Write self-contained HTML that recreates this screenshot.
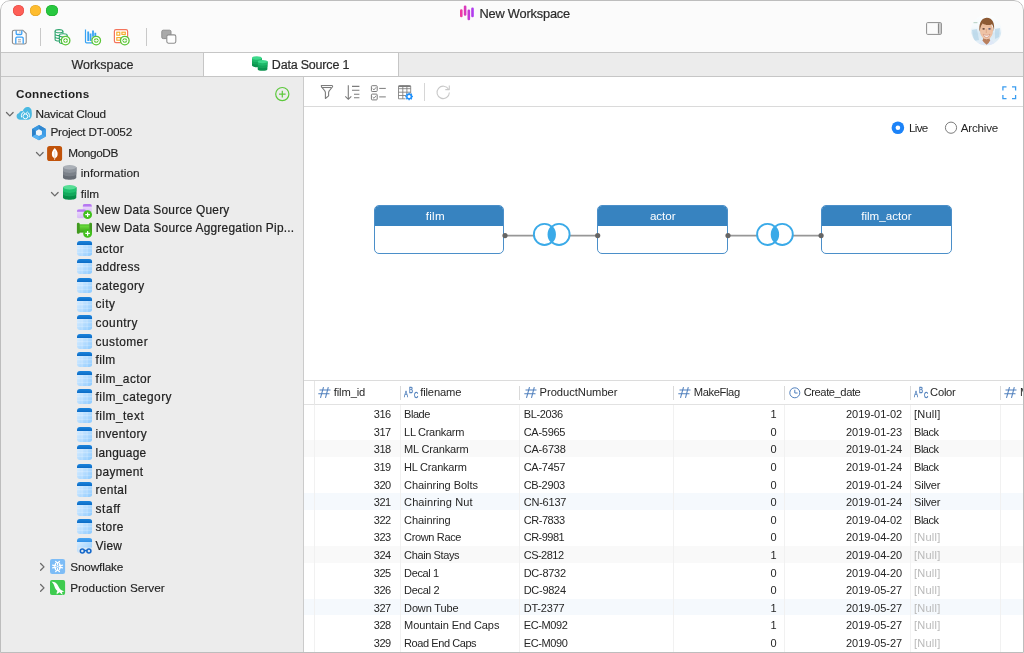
<!DOCTYPE html>
<html><head><meta charset="utf-8"><title>New Workspace</title>
<style>
*{box-sizing:border-box;margin:0;padding:0}
html,body{width:1024px;height:653px;overflow:hidden;background:#fff;font-family:"Liberation Sans",sans-serif;color:#262626}
#win{position:absolute;left:0;top:0;width:1024px;height:653px;border-radius:10px 10px 0 0;overflow:hidden;background:#fff;will-change:transform}
#frame{position:absolute;left:0;top:0;width:1024px;height:653px;border:1px solid #bdbdbd;border-radius:10px 10px 0 0;pointer-events:none}
.abs{position:absolute}
#titlebar{position:absolute;left:0;top:0;width:1024px;height:53px;background:#fbfbfb;border-bottom:1px solid #c6c6c6}
.tl{position:absolute;top:4.7px;width:11.4px;height:11.4px;border-radius:50%}
#tabbar{position:absolute;left:0;top:53px;width:1024px;height:24px;background:#ececec;border-bottom:1px solid #c6c6c6}
#tab2{position:absolute;left:203px;top:53px;width:196px;height:23px;background:#fff;border-left:1px solid #c6c6c6;border-right:1px solid #c6c6c6}
#side{position:absolute;left:0;top:77px;width:304px;height:576px;background:#ececec;border-right:1px solid #cbcbcb}
.t{position:absolute;white-space:pre}
#main{position:absolute;left:304px;top:77px;width:720px;height:576px;background:#fff}
svg{position:absolute;overflow:visible}
</style></head>
<body>
<div id="win">
<div id="titlebar"></div>
<div class="tl" style="left:12.9px;background:#fe5f57;box-shadow:inset 0 0 0 .5px #e0443e"></div>
<div class="tl" style="left:29.7px;background:#febc2e;box-shadow:inset 0 0 0 .5px #dea123"></div>
<div class="tl" style="left:46.3px;background:#28c840;box-shadow:inset 0 0 0 .5px #1aab29"></div>
<svg style="left:459px;top:5px" width="16" height="16" viewBox="0 0 16 16">
<defs><linearGradient id="lg1" gradientUnits="userSpaceOnUse" x1="1" y1="0" x2="15" y2="0"><stop offset="0" stop-color="#f5369b"/><stop offset="1" stop-color="#a93cf7"/></linearGradient></defs>
<g fill="url(#lg1)"><rect x="1" y="4.2" width="2.6" height="8" rx="1.2"/><rect x="4.8" y="0.6" width="2.6" height="10.2" rx="1.2"/><rect x="8.5" y="4.6" width="2.6" height="10.6" rx="1.2"/><rect x="12.2" y="2.6" width="2.6" height="9.6" rx="1.2"/></g></svg>
<div class="t" style="top:5.56px;font-size:12.8px;height:16px;line-height:16px;color:#2b2b2b;letter-spacing:-0.178px;left:479.4px;-webkit-text-stroke:.2px #2b2b2b;">New Workspace</div>
<svg style="left:11px;top:28px" width="18" height="18" viewBox="0 0 18 18">
<path d="M3.2 2.2h8.6l3.4 3.4v8.6a1.8 1.8 0 0 1-1.8 1.8H3.2a1.8 1.8 0 0 1-1.8-1.8V4a1.8 1.8 0 0 1 1.8-1.8z" fill="#fdfdfd" stroke="#8c8c8c" stroke-width="1.1"/>
<path d="M5.2 2.4v3.1a1 1 0 0 0 1 1h3.6a1 1 0 0 0 1-1V2.4" fill="none" stroke="#3aa0f5" stroke-width="1.3"/>
<path d="M4.8 15.8v-5.4a1.2 1.2 0 0 1 1.2-1.2h5a1.2 1.2 0 0 1 1.2 1.2v5.4" fill="none" stroke="#3aa0f5" stroke-width="1.3"/>
<path d="M7 11.8h3M7 13.8h3" stroke="#9a9a9a" stroke-width="0.9"/><path d="M8.9 3.4v1.4" stroke="#9a9a9a" stroke-width="0.9"/></svg>
<div class="abs" style="left:40px;top:28px;width:1px;height:18px;background:#c9c9c9"></div>
<svg style="left:54px;top:28px" width="18" height="18" viewBox="0 0 18 18"><g fill="none" stroke="#2ea56e" stroke-width="1.1">
<ellipse cx="5" cy="3.2" rx="3.9" ry="1.6"/><path d="M1.1 3.2v8.2c0 .9 1.7 1.6 3.9 1.6M8.9 3.2v2.2M1.1 6c0 .9 1.7 1.6 3.9 1.6M1.1 8.8c0 .9 1.7 1.6 3.9 1.6"/>
<ellipse cx="9.3" cy="7.4" rx="3.9" ry="1.6"/><path d="M5.4 7.4v6.6c0 .9 1.7 1.6 3.9 1.6M13.2 7.4v2M5.4 10.6c0 .9 1.7 1.6 3.9 1.6"/></g><circle cx="11.6" cy="12.6" r="4.3" fill="#fff" stroke="#5bc637" stroke-width="1.3"/><circle cx="11.6" cy="12.6" r="2.4" fill="#5bc637"/><path d="M9.8 12.6h3.6M11.6 10.8v3.6" stroke="#fff" stroke-width="0.9"/></svg>
<svg style="left:84px;top:28px" width="18" height="18" viewBox="0 0 18 18"><g fill="none" stroke="#37a3f4">
<path d="M1.5 1.6v12.2a1 1 0 0 0 1 1H9" stroke-width="1.2"/><path d="M4.200 3.600v9.400M6.600 5.600v7.400M9 2.600v6.200M11.300 4.800v3.400" stroke-width="1.800"/></g><circle cx="12.2" cy="12.6" r="4.3" fill="#fff" stroke="#5bc637" stroke-width="1.3"/><circle cx="12.2" cy="12.6" r="2.4" fill="#5bc637"/><path d="M10.4 12.6h3.6M12.2 10.8v3.6" stroke="#fff" stroke-width="0.9"/></svg>
<svg style="left:113px;top:28px" width="18" height="18" viewBox="0 0 18 18">
<rect x="1.4" y="1.7" width="13.2" height="13" rx="1.6" fill="#fff" stroke="#f4745c" stroke-width="1.2"/>
<g fill="none" stroke="#f5a827" stroke-width="1.1"><rect x="3.8" y="4.2" width="3" height="3"/><rect x="8.9" y="4.2" width="3.4" height="2.2"/><rect x="3.8" y="9.6" width="3.6" height="2.6"/></g><circle cx="11.8" cy="12.6" r="4.3" fill="#fff" stroke="#5bc637" stroke-width="1.3"/><circle cx="11.8" cy="12.6" r="2.4" fill="#5bc637"/><path d="M10 12.6h3.6M11.8 10.8v3.6" stroke="#fff" stroke-width="0.9"/></svg>
<div class="abs" style="left:146px;top:28px;width:1px;height:18px;background:#c9c9c9"></div>
<svg style="left:160px;top:28px" width="18" height="18" viewBox="0 0 18 18">
<rect x="1.8" y="2.2" width="9.2" height="8.4" rx="1.4" fill="#a9a9a9" stroke="#8f8f8f" stroke-width="1"/>
<rect x="6.8" y="6.9" width="9" height="8.3" rx="1.6" fill="#fdfdfd" stroke="#8f8f8f" stroke-width="1.1"/></svg>
<svg style="left:926px;top:22px" width="16" height="13" viewBox="0 0 16 13">
<rect x="12.4" y="1" width="3" height="11" fill="#cfcfcf"/><rect x="0.6" y="0.6" width="14.8" height="11.8" rx="1" fill="none" stroke="#8d8d8d" stroke-width="1"/><path d="M12.4 1.400v10.200" stroke="#808080" stroke-width="1"/></svg>
<svg style="left:970.800px;top:14.500px" width="30.600" height="30.600" viewBox="0 0 30.600 30.600"><defs><clipPath id="av"><circle cx="15.300" cy="15.300" r="15.200"/></clipPath>
<linearGradient id="avb" x1="0" y1="0" x2="0" y2="1"><stop offset="0" stop-color="#fdfefe"/><stop offset=".42" stop-color="#f4f9fc"/><stop offset=".6" stop-color="#d6e8f3"/><stop offset="1" stop-color="#e6f0f7"/></linearGradient></defs>
<g clip-path="url(#av)"><rect width="30.600" height="30.600" fill="url(#avb)"/>
<path d="M1 15l5-1 2 11-5 1zM24 14l5-1-1 9-4 2z" fill="#b7d5e8" opacity=".75"/><rect x="2.400" y="7" width="4" height="1.200" fill="#a9c9b8" opacity=".7"/>
<path d="M6.500 30.600c1.200-3.200 3.800-4.800 5.800-5.300l3.300 2.600 3.300-2.900c2.400.5 4.600 2.300 5.600 5.600z" fill="#dfe8f7"/>
<path d="M11.600 25.600c1 1.700 2.400 3 4 4.200 1.500-1.200 2.700-2.700 3.500-4.400l-1.100-3.400h-5.300z" fill="#b97f5e"/>
<ellipse cx="15.500" cy="15.400" rx="6.500" ry="8.800" fill="#ecbd9d"/><ellipse cx="15.500" cy="18" rx="5.400" ry="6.200" fill="#efc3a6"/>
<path d="M8.700 16.800C7.400 9.800 9.800 3 15.600 2.700c5.800-.2 8.500 5.200 7.300 13.700-.2-3.400-.8-5.600-1.900-7.200-2.700 1.300-6.700 1.200-9.300-.6-1.700 1.800-2.500 4.600-3 8.200z" fill="#8d5a34"/>
<path d="M12.300 19.300c2 1.400 4.600 1.400 6.600 0-.5 2-1.800 3-3.300 3s-2.800-1-3.300-3z" fill="#fff" stroke="#cf8d77" stroke-width=".7"/>
<ellipse cx="12.600" cy="13.900" rx="1.300" ry=".8" fill="#6b4a3a"/><ellipse cx="18.500" cy="13.900" rx="1.300" ry=".8" fill="#5f5d78"/><path d="M15.300 14v4" stroke="#d9a283" stroke-width=".8"/></g></svg>
<div id="tabbar"></div><div id="tab2"></div>
<div class="t" style="top:56.67px;font-size:12.5px;height:16px;line-height:16px;color:#2b2b2b;letter-spacing:-0.037px;left:71.5px;-webkit-text-stroke:.2px #2b2b2b;">Workspace</div>
<div class="t" style="top:56.67px;font-size:12.5px;height:16px;line-height:16px;color:#2b2b2b;letter-spacing:-0.193px;left:271.8px;-webkit-text-stroke:.2px #2b2b2b;">Data Source 1</div>
<svg style="left:252px;top:56px" width="16" height="16" viewBox="0 0 16 16"><path d="M0 2v7.600c0 .9 2.200 1.600 4.850 1.600s4.850-.7 4.850-1.600v-7.600z" fill="#0c934f"/><path d="M0 2v5c0 .9 2.200 1.600 4.850 1.600s4.850-.7 4.850-1.600v-5z" fill="#14a65b"/><path d="M0 2v2.500c0 .9 2.200 1.600 4.850 1.600s4.850-.7 4.850-1.600v-2.500z" fill="#1fb86a"/><ellipse cx="4.85" cy="2" rx="4.850" ry="1.650" fill="#3fd98c"/><path d="M5.7 5.6v7.600c0 .9 2.200 1.600 4.850 1.600s4.850-.7 4.850-1.600v-7.600z" fill="#0c934f"/><path d="M5.7 5.6v5c0 .9 2.200 1.600 4.850 1.600s4.850-.7 4.850-1.600v-5z" fill="#14a65b"/><path d="M5.7 5.6v2.500c0 .9 2.200 1.600 4.850 1.600s4.850-.7 4.850-1.600v-2.500z" fill="#1fb86a"/><ellipse cx="10.55" cy="5.6" rx="4.850" ry="1.650" fill="#3fd98c"/></svg>
<div id="side"></div>
<div class="t" style="top:85.95px;font-size:11.7px;height:16px;line-height:16px;color:#1f1f1f;font-weight:bold;letter-spacing:0.242px;left:16px;">Connections</div>
<svg style="left:274px;top:86px" width="16" height="16" viewBox="0 0 16 16"><circle cx="8.300" cy="8.100" r="6.600" fill="none" stroke="#5cc83c" stroke-width="1.200"/><path d="M5 8.100h6.600M8.300 4.800v6.600" stroke="#5cc83c" stroke-width="1.200"/></svg>
<svg style="left:5.8px;top:112.2px" width="8" height="5" viewBox="0 0 8 5"><path d="M0.500 0.500l3.300 3.400 3.300-3.400" fill="none" stroke="#6b6b6b" stroke-width="1.300" stroke-linecap="round" stroke-linejoin="round"/></svg>
<svg style="left:35.6px;top:151.6px" width="8" height="5" viewBox="0 0 8 5"><path d="M0.500 0.500l3.300 3.400 3.300-3.400" fill="none" stroke="#6b6b6b" stroke-width="1.300" stroke-linecap="round" stroke-linejoin="round"/></svg>
<svg style="left:51.4px;top:191.6px" width="8" height="5" viewBox="0 0 8 5"><path d="M0.500 0.500l3.300 3.400 3.300-3.400" fill="none" stroke="#6b6b6b" stroke-width="1.300" stroke-linecap="round" stroke-linejoin="round"/></svg>
<svg style="left:39.8px;top:563.2px" width="5" height="8" viewBox="0 0 5 8"><path d="M0.600 0.500l3.400 3.400-3.400 3.400" fill="none" stroke="#6b6b6b" stroke-width="1.300" stroke-linecap="round" stroke-linejoin="round"/></svg>
<svg style="left:39.8px;top:583.6px" width="5" height="8" viewBox="0 0 5 8"><path d="M0.600 0.500l3.400 3.400-3.400 3.400" fill="none" stroke="#6b6b6b" stroke-width="1.300" stroke-linecap="round" stroke-linejoin="round"/></svg>
<svg style="left:16px;top:106px" width="17" height="15" viewBox="0 0 17 15">
<path d="M4.300 13.800C2.200 13.800.6 12.300.6 10.300c0-1.600 1.100-2.900 2.600-3.200C3.400 5.800 4.400 5 5.600 5c.4 0 .8.100 1.100.3C7.400 2.800 9.200 1.100 11.400 1.100c2.600 0 4.500 2.100 4.300 4.800.2 1 .2 2 .1 3-.1 2.800-1.900 4.900-4.300 4.900z" fill="#4ab9e2"/>
<g fill="none" stroke="#fff" stroke-width=".95"><circle cx="9.400" cy="10.400" r="2.400"/><path d="M5.600 11.400c-.6-2.400.2-4.400 1.700-5.300.9.300 1.400 1 1.500 1.800M13.200 11.400c.6-2.400-.2-4.400-1.700-5.300-.9.300-1.400 1-1.500 1.800"/></g></svg>
<svg style="left:32px;top:124.800px" width="14" height="16" viewBox="0 0 14 16">
<path d="M6.950.1l6.850 3.800v7.600l-6.850 3.800L.1 11.500V3.900z" fill="#3893db"/>
<path d="M6.950.1l6.850 3.800-3.400 1.900-3.450-1.900z" fill="#2f86cf"/><path d="M.1 3.900L6.950.1v3.800L3.500 5.800z" fill="#3a97df"/><path d="M.1 11.500V3.900l3.400 1.900v3.800z" fill="#2b7fc6"/><path d="M13.800 3.900v7.600l-3.400-1.900V5.800z" fill="#3d9ce6"/><path d="M6.950 15.300L.1 11.500l3.400-1.900 3.450 1.900z" fill="#58b4f5"/><path d="M6.950 15.300v-3.800l3.450-1.900 3.400 1.900z" fill="#4aa8ee"/>
<path d="M6.950 4.300l3 1.700v3.400l-3 1.700-3-1.700V6z" fill="#f2f6fa"/></svg>
<svg style="left:47px;top:145.500px" width="16" height="16" viewBox="0 0 16 16"><rect x=".1" y=".1" width="15" height="15" rx="2.600" fill="#c1530a"/>
<path d="M7.750 2.100c1.900 2 2.900 3.800 2.900 5.900 0 2.100-1.100 3.500-2.500 4.300l-.15 1.600h-.5l-.15-1.600C5.950 11.500 4.850 10.100 4.850 8c0-2.100 1-3.900 2.900-5.900z" fill="#fff"/><path d="M7.750 5v8.800" stroke="#e2a77e" stroke-width=".5"/></svg>
<svg style="left:62.9px;top:165.1px" width="14" height="15" viewBox="0 0 14 15"><path d="M0 2.200v10.200c0 1.300 3 2.300 6.650 2.300s6.650-1 6.650-2.300V2.200z" fill="#676d75"/><path d="M0 2.200v6.800c0 1.300 3 2.300 6.650 2.300s6.650-1 6.650-2.300V2.200z" fill="#7b8189"/><path d="M0 2.200v3.400c0 1.300 3 2.300 6.650 2.300s6.650-1 6.650-2.300V2.200z" fill="#8f959d"/><ellipse cx="6.650" cy="2.300" rx="6.650" ry="2.200" fill="#abb0b7"/></svg>
<svg style="left:62.9px;top:185.2px" width="14" height="15" viewBox="0 0 14 15"><path d="M0 2.200v10.200c0 1.300 3 2.300 6.650 2.300s6.650-1 6.650-2.300V2.200z" fill="#088e49"/><path d="M0 2.200v6.800c0 1.300 3 2.300 6.650 2.300s6.650-1 6.650-2.300V2.200z" fill="#14a95c"/><path d="M0 2.200v3.400c0 1.300 3 2.300 6.650 2.300s6.650-1 6.650-2.300V2.200z" fill="#22c170"/><ellipse cx="6.650" cy="2.300" rx="6.650" ry="2.200" fill="#56dd95"/></svg>
<svg style="left:76px;top:203px" width="17" height="17" viewBox="0 0 17 17"><defs>
<linearGradient id="qb" x1="0" y1="0" x2="0" y2="1"><stop offset="0" stop-color="#efe2fc"/><stop offset="1" stop-color="#d7b9f8"/></linearGradient>
<clipPath id="qc1"><rect x="6.600" y="1" width="9.300" height="9" rx="2"/></clipPath><clipPath id="qc2"><rect x=".9" y="6.200" width="9.300" height="9.200" rx="2"/></clipPath></defs>
<g clip-path="url(#qc1)"><rect x="6.600" y="1" width="9.300" height="9" fill="url(#qb)"/><rect x="6.600" y="1" width="9.300" height="2.600" fill="#b678f1"/></g>
<g clip-path="url(#qc2)"><rect x=".9" y="6.200" width="9.300" height="9.200" fill="url(#qb)"/><rect x=".9" y="6.200" width="9.300" height="2.600" fill="#b678f1"/></g>
<circle cx="11.6" cy="11.7" r="4.400" fill="#41c01c"/><path d="M9.3 11.7h4.600M11.6 9.4v4.600" stroke="#fff" stroke-width="1.250"/></svg>
<svg style="left:76px;top:222px" width="17" height="17" viewBox="0 0 17 17"><defs>
<linearGradient id="pg" x1="0" y1="0" x2="0" y2="1"><stop offset="0" stop-color="#4fc226"/><stop offset=".25" stop-color="#66d63a"/><stop offset="1" stop-color="#3c9e19"/></linearGradient></defs>
<rect x="3" y="2.300" width="10.500" height="8.300" fill="url(#pg)"/>
<rect x=".9" y=".7" width="2.800" height="11" rx="1.200" fill="#41991f"/><rect x="13.200" y=".7" width="2.800" height="11" rx="1.200" fill="#41991f"/>
<circle cx="11.6" cy="11.4" r="4.400" fill="#41c01c"/><path d="M9.3 11.4h4.600M11.6 9.1v4.600" stroke="#fff" stroke-width="1.250"/></svg>
<svg width="0" height="0" style="left:0;top:0"><defs>
<linearGradient id="th" x1="0" y1="0" x2="0" y2="1"><stop offset="0" stop-color="#1c84dc"/><stop offset="1" stop-color="#0c6cc6"/></linearGradient>
<linearGradient id="tb" x1="0" y1="0" x2="1" y2="1"><stop offset="0" stop-color="#e4f2ff"/><stop offset="1" stop-color="#8ccaff"/></linearGradient>
<linearGradient id="th2" x1="0" y1="0" x2="0" y2="1"><stop offset="0" stop-color="#4aa5f2"/><stop offset="1" stop-color="#2f8fe6"/></linearGradient>
<clipPath id="tc"><rect x="0" y="0" width="15.200" height="15" rx="3"/></clipPath></defs></svg>
<div class="t" style="top:105.91px;font-size:11.8px;height:16px;line-height:16px;color:#222;letter-spacing:-0.236px;left:35.5px;-webkit-text-stroke:.12px #222;">Navicat Cloud</div>
<div class="t" style="top:123.91px;font-size:11.8px;height:16px;line-height:16px;color:#222;letter-spacing:-0.246px;left:50.4px;-webkit-text-stroke:.12px #222;">Project DT-0052</div>
<div class="t" style="top:144.91px;font-size:11.8px;height:16px;line-height:16px;color:#222;letter-spacing:-0.378px;left:68.2px;-webkit-text-stroke:.12px #222;">MongoDB</div>
<div class="t" style="top:164.91px;font-size:11.8px;height:16px;line-height:16px;color:#222;letter-spacing:0.064px;left:80.7px;-webkit-text-stroke:.12px #222;">information</div>
<div class="t" style="top:185.91px;font-size:11.8px;height:16px;line-height:16px;color:#222;letter-spacing:-0.020px;left:80.8px;-webkit-text-stroke:.12px #222;">film</div>
<div class="t" style="top:201.88px;font-size:11.9px;height:16px;line-height:16px;color:#222;letter-spacing:0.236px;left:95.7px;-webkit-text-stroke:.2px #222;">New Data Source Query</div>
<div class="t" style="top:219.88px;font-size:11.9px;height:16px;line-height:16px;color:#222;letter-spacing:0.246px;left:95.7px;-webkit-text-stroke:.2px #222;">New Data Source Aggregation Pip...</div>
<div class="t" style="top:558.91px;font-size:11.8px;height:16px;line-height:16px;color:#222;letter-spacing:-0.155px;left:70.2px;-webkit-text-stroke:.12px #222;">Snowflake</div>
<div class="t" style="top:579.91px;font-size:11.8px;height:16px;line-height:16px;color:#222;letter-spacing:0.011px;left:70.2px;-webkit-text-stroke:.12px #222;">Production Server</div>
<div class="t" style="top:240.88px;font-size:11.9px;height:16px;line-height:16px;color:#222;letter-spacing:0.416px;left:95.6px;-webkit-text-stroke:.2px #222;">actor</div>
<div class="t" style="top:258.88px;font-size:11.9px;height:16px;line-height:16px;color:#222;letter-spacing:0.298px;left:95.6px;-webkit-text-stroke:.2px #222;">address</div>
<div class="t" style="top:277.88px;font-size:11.9px;height:16px;line-height:16px;color:#222;letter-spacing:0.442px;left:95.6px;-webkit-text-stroke:.2px #222;">category</div>
<div class="t" style="top:295.88px;font-size:11.9px;height:16px;line-height:16px;color:#222;letter-spacing:0.485px;left:95.6px;-webkit-text-stroke:.2px #222;">city</div>
<div class="t" style="top:314.88px;font-size:11.9px;height:16px;line-height:16px;color:#222;letter-spacing:0.483px;left:95.6px;-webkit-text-stroke:.2px #222;">country</div>
<div class="t" style="top:333.88px;font-size:11.9px;height:16px;line-height:16px;color:#222;letter-spacing:0.442px;left:95.6px;-webkit-text-stroke:.2px #222;">customer</div>
<div class="t" style="top:351.88px;font-size:11.9px;height:16px;line-height:16px;color:#222;letter-spacing:0.367px;left:95.6px;-webkit-text-stroke:.2px #222;">film</div>
<div class="t" style="top:370.88px;font-size:11.9px;height:16px;line-height:16px;color:#222;letter-spacing:0.428px;left:95.6px;-webkit-text-stroke:.2px #222;">film_actor</div>
<div class="t" style="top:388.88px;font-size:11.9px;height:16px;line-height:16px;color:#222;letter-spacing:0.432px;left:95.6px;-webkit-text-stroke:.2px #222;">film_category</div>
<div class="t" style="top:407.88px;font-size:11.9px;height:16px;line-height:16px;color:#222;letter-spacing:0.477px;left:95.6px;-webkit-text-stroke:.2px #222;">film_text</div>
<div class="t" style="top:425.88px;font-size:11.9px;height:16px;line-height:16px;color:#222;letter-spacing:0.356px;left:95.6px;-webkit-text-stroke:.2px #222;">inventory</div>
<div class="t" style="top:444.88px;font-size:11.9px;height:16px;line-height:16px;color:#222;letter-spacing:0.223px;left:95.6px;-webkit-text-stroke:.2px #222;">language</div>
<div class="t" style="top:463.88px;font-size:11.9px;height:16px;line-height:16px;color:#222;letter-spacing:0.298px;left:95.6px;-webkit-text-stroke:.2px #222;">payment</div>
<div class="t" style="top:481.88px;font-size:11.9px;height:16px;line-height:16px;color:#222;letter-spacing:0.290px;left:95.6px;-webkit-text-stroke:.2px #222;">rental</div>
<div class="t" style="top:500.88px;font-size:11.9px;height:16px;line-height:16px;color:#222;letter-spacing:0.559px;left:95.6px;-webkit-text-stroke:.2px #222;">staff</div>
<div class="t" style="top:518.88px;font-size:11.9px;height:16px;line-height:16px;color:#222;letter-spacing:0.341px;left:95.6px;-webkit-text-stroke:.2px #222;">store</div>
<div class="t" style="top:537.88px;font-size:11.9px;height:16px;line-height:16px;color:#222;letter-spacing:0.246px;left:95.6px;-webkit-text-stroke:.2px #222;">View</div>
<svg style="left:76.9px;top:240.9px" width="16" height="15" viewBox="0 0 16 15"><g clip-path="url(#tc)"><rect width="15.200" height="15" fill="url(#tb)"/><path d="M5.100 4v11M10.100 4v11M0 7.700h15.200M0 11.300h15.200" stroke="#fff" stroke-opacity=".35" stroke-width=".7"/><rect width="15.200" height="4" fill="url(#th)"/></g></svg>
<svg style="left:76.9px;top:259.47px" width="16" height="15" viewBox="0 0 16 15"><g clip-path="url(#tc)"><rect width="15.200" height="15" fill="url(#tb)"/><path d="M5.100 4v11M10.100 4v11M0 7.700h15.200M0 11.300h15.200" stroke="#fff" stroke-opacity=".35" stroke-width=".7"/><rect width="15.200" height="4" fill="url(#th)"/></g></svg>
<svg style="left:76.9px;top:278.04px" width="16" height="15" viewBox="0 0 16 15"><g clip-path="url(#tc)"><rect width="15.200" height="15" fill="url(#tb)"/><path d="M5.100 4v11M10.100 4v11M0 7.700h15.200M0 11.300h15.200" stroke="#fff" stroke-opacity=".35" stroke-width=".7"/><rect width="15.200" height="4" fill="url(#th)"/></g></svg>
<svg style="left:76.9px;top:296.61px" width="16" height="15" viewBox="0 0 16 15"><g clip-path="url(#tc)"><rect width="15.200" height="15" fill="url(#tb)"/><path d="M5.100 4v11M10.100 4v11M0 7.700h15.200M0 11.300h15.200" stroke="#fff" stroke-opacity=".35" stroke-width=".7"/><rect width="15.200" height="4" fill="url(#th)"/></g></svg>
<svg style="left:76.9px;top:315.18px" width="16" height="15" viewBox="0 0 16 15"><g clip-path="url(#tc)"><rect width="15.200" height="15" fill="url(#tb)"/><path d="M5.100 4v11M10.100 4v11M0 7.700h15.200M0 11.300h15.200" stroke="#fff" stroke-opacity=".35" stroke-width=".7"/><rect width="15.200" height="4" fill="url(#th)"/></g></svg>
<svg style="left:76.9px;top:333.75px" width="16" height="15" viewBox="0 0 16 15"><g clip-path="url(#tc)"><rect width="15.200" height="15" fill="url(#tb)"/><path d="M5.100 4v11M10.100 4v11M0 7.700h15.200M0 11.300h15.200" stroke="#fff" stroke-opacity=".35" stroke-width=".7"/><rect width="15.200" height="4" fill="url(#th)"/></g></svg>
<svg style="left:76.9px;top:352.32px" width="16" height="15" viewBox="0 0 16 15"><g clip-path="url(#tc)"><rect width="15.200" height="15" fill="url(#tb)"/><path d="M5.100 4v11M10.100 4v11M0 7.700h15.200M0 11.300h15.200" stroke="#fff" stroke-opacity=".35" stroke-width=".7"/><rect width="15.200" height="4" fill="url(#th)"/></g></svg>
<svg style="left:76.9px;top:370.89px" width="16" height="15" viewBox="0 0 16 15"><g clip-path="url(#tc)"><rect width="15.200" height="15" fill="url(#tb)"/><path d="M5.100 4v11M10.100 4v11M0 7.700h15.200M0 11.300h15.200" stroke="#fff" stroke-opacity=".35" stroke-width=".7"/><rect width="15.200" height="4" fill="url(#th)"/></g></svg>
<svg style="left:76.9px;top:389.46px" width="16" height="15" viewBox="0 0 16 15"><g clip-path="url(#tc)"><rect width="15.200" height="15" fill="url(#tb)"/><path d="M5.100 4v11M10.100 4v11M0 7.700h15.200M0 11.300h15.200" stroke="#fff" stroke-opacity=".35" stroke-width=".7"/><rect width="15.200" height="4" fill="url(#th)"/></g></svg>
<svg style="left:76.9px;top:408.03px" width="16" height="15" viewBox="0 0 16 15"><g clip-path="url(#tc)"><rect width="15.200" height="15" fill="url(#tb)"/><path d="M5.100 4v11M10.100 4v11M0 7.700h15.200M0 11.300h15.200" stroke="#fff" stroke-opacity=".35" stroke-width=".7"/><rect width="15.200" height="4" fill="url(#th)"/></g></svg>
<svg style="left:76.9px;top:426.6px" width="16" height="15" viewBox="0 0 16 15"><g clip-path="url(#tc)"><rect width="15.200" height="15" fill="url(#tb)"/><path d="M5.100 4v11M10.100 4v11M0 7.700h15.200M0 11.300h15.200" stroke="#fff" stroke-opacity=".35" stroke-width=".7"/><rect width="15.200" height="4" fill="url(#th)"/></g></svg>
<svg style="left:76.9px;top:445.17px" width="16" height="15" viewBox="0 0 16 15"><g clip-path="url(#tc)"><rect width="15.200" height="15" fill="url(#tb)"/><path d="M5.100 4v11M10.100 4v11M0 7.700h15.200M0 11.300h15.200" stroke="#fff" stroke-opacity=".35" stroke-width=".7"/><rect width="15.200" height="4" fill="url(#th)"/></g></svg>
<svg style="left:76.9px;top:463.74px" width="16" height="15" viewBox="0 0 16 15"><g clip-path="url(#tc)"><rect width="15.200" height="15" fill="url(#tb)"/><path d="M5.100 4v11M10.100 4v11M0 7.700h15.200M0 11.300h15.200" stroke="#fff" stroke-opacity=".35" stroke-width=".7"/><rect width="15.200" height="4" fill="url(#th)"/></g></svg>
<svg style="left:76.9px;top:482.31px" width="16" height="15" viewBox="0 0 16 15"><g clip-path="url(#tc)"><rect width="15.200" height="15" fill="url(#tb)"/><path d="M5.100 4v11M10.100 4v11M0 7.700h15.200M0 11.300h15.200" stroke="#fff" stroke-opacity=".35" stroke-width=".7"/><rect width="15.200" height="4" fill="url(#th)"/></g></svg>
<svg style="left:76.9px;top:500.88px" width="16" height="15" viewBox="0 0 16 15"><g clip-path="url(#tc)"><rect width="15.200" height="15" fill="url(#tb)"/><path d="M5.100 4v11M10.100 4v11M0 7.700h15.200M0 11.300h15.200" stroke="#fff" stroke-opacity=".35" stroke-width=".7"/><rect width="15.200" height="4" fill="url(#th)"/></g></svg>
<svg style="left:76.9px;top:519.45px" width="16" height="15" viewBox="0 0 16 15"><g clip-path="url(#tc)"><rect width="15.200" height="15" fill="url(#tb)"/><path d="M5.100 4v11M10.100 4v11M0 7.700h15.200M0 11.300h15.200" stroke="#fff" stroke-opacity=".35" stroke-width=".7"/><rect width="15.200" height="4" fill="url(#th)"/></g></svg>
<svg style="left:76.900px;top:537.600px" width="16" height="16" viewBox="0 0 16 16"><g clip-path="url(#tc)"><rect width="15.200" height="15" fill="url(#tb)"/><rect width="15.200" height="4" fill="url(#th2)"/></g>
<rect x="1.500" y="9.600" width="14" height="6" fill="#ececec" opacity=".75"/>
<g fill="none" stroke="#1467c9" stroke-width="1.500"><circle cx="5.300" cy="13" r="2"/><circle cx="11.900" cy="13" r="2"/><path d="M7.300 12.600h2.600"/></g></svg>
<svg style="left:50px;top:559px" width="16" height="16" viewBox="0 0 16 16"><rect x="0" y="0" width="15.100" height="15" rx="2.200" fill="#7dbcf6"/>
<g stroke="#fff" stroke-width="1.250" fill="none" stroke-linecap="round" stroke-linejoin="round">
<path d="M5.700 2.500l1.850 1.700 1.850-1.700M5.700 12.500l1.850-1.700 1.850 1.700"/>
<path d="M2.600 6.200l2.400.7.600-2.400M12.500 8.800l-2.400-.7-.6 2.400M2.600 8.800l2.400-.7.600 2.400M12.500 6.200l-2.400.7-.6-2.400"/>
<path d="M7.550 4.400v1.400M7.550 9.200v1.400M4.900 6l1.200.7M9 8.300l1.200.7M4.900 9l1.200-.7M9 6.700l1.200-.7" stroke-width="1.100"/></g>
<path d="M7.550 6.500l1 1-1 1-1-1z" fill="#fff"/></svg>
<svg style="left:50px;top:579.600px" width="16" height="16" viewBox="0 0 16 16"><rect x="0" y="0" width="15.100" height="15" rx="2" fill="#3ecb4f"/>
<path d="M1.600 1.800c2.600-.3 4.600.9 5.900 3 1.200 1.900 1.900 4 3.600 5.300 1 .7 2.100.9 3.200 1.400-1.100.2-1.900.4-2.500 1 .3.700.6 1.300 1.200 1.900-1.500-.3-2.500-1.100-3.300-2.200-1.100.5-2.200 1.100-2.800 2.300-.5-1.300-.2-2.400.6-3.400-1.600-1.200-2.500-2.700-3-4.500-.4-1.500-.9-3-2.900-4.800z" fill="#fff"/></svg>
<div id="main"></div>
<div class="abs" style="left:304px;top:106px;width:720px;height:1px;background:#dadada"></div>
<svg style="left:319px;top:84px" width="16" height="16" viewBox="0 0 16 16"><g fill="none" stroke="#7c7c7c" stroke-width="1.100" stroke-linejoin="round">
<path d="M2.300 1.500h10.400a.9.900 0 0 1 .7 1.500c-1.200 1.500-3.800 3.500-3.800 5.500v3.300l-3.200 2.700v-6c0-2-2.600-4-3.800-5.500a.9.900 0 0 1 .7-1.500z"/><path d="M2.600 3.500h9.800"/></g></svg>
<svg style="left:344px;top:84px" width="17" height="17" viewBox="0 0 17 17"><g fill="none" stroke="#7c7c7c" stroke-width="1.100">
<path d="M4.300 1.200v14M1.300 12.300l3 3 3-3"/><path d="M8 2.400h7.400M8 6.300h7.400M10 10.200h5.400M10 13.700h5.400"/></g></svg>
<svg style="left:370px;top:84px" width="17" height="17" viewBox="0 0 17 17"><g fill="none" stroke="#7c7c7c" stroke-width="1">
<rect x="1.400" y="1.700" width="5.800" height="5.800" rx=".8"/><rect x="1.400" y="10.100" width="5.800" height="5.800" rx=".8"/><path d="M9.200 4.400h6.600M9.200 12.900h6.600"/>
<path d="M2.700 4.600l1.300 1.300 2.100-2.600M2.700 13l1.300 1.300 2.100-2.600" stroke-width=".9"/></g></svg>
<svg style="left:397px;top:84px" width="18" height="18" viewBox="0 0 18 18"><g fill="none" stroke="#7c7c7c" stroke-width=".85">
<path d="M1.500 14.800V2.600a1 1 0 0 1 1-1h10.200a1 1 0 0 1 1 1v7M1.500 14.800h7"/><path d="M1.500 2.300h12.200" stroke-width="1.500"/><path d="M1.500 4.700h12.200M1.500 8.200h12.200M1.500 11.500h7.500M5.800 1.600v13.200M9.900 1.600v8.500"/></g>
<g transform="translate(12.100 12.500)"><circle r="2.300" fill="#fff" stroke="#1e8ffa" stroke-width="1.500"/><g stroke="#1e8ffa" stroke-width="1.350"><path d="M0-3.800v1.200M0 3.800v-1.200M-3.800 0h1.200M3.800 0h-1.200M-2.700-2.700l.85.85M2.700 2.700l-.85-.85M-2.700 2.700l.85-.85M2.700-2.700l-.85.85"/></g></g></svg>
<div class="abs" style="left:424px;top:83px;width:1px;height:18px;background:#d6d6d6"></div>
<svg style="left:435px;top:84px" width="18" height="18" viewBox="0 0 18 18"><g fill="none" stroke="#c9c9c9" stroke-width="1.100">
<path d="M13.600 5.300A6.200 6.200 0 1 0 14.400 8.600"/><path d="M14.300 1.600v4h-4" stroke-linejoin="round"/></g></svg>
<svg style="left:1002px;top:86px" width="15" height="14" viewBox="0 0 15 14"><g fill="none" stroke="#3b9df0" stroke-width="1.300">
<path d="M.9 4.400V.9h3.600M10 .9h3.600v3.500M13.600 9v3.600H10M4.500 12.600H.9V9"/></g></svg>
<svg style="left:891px;top:121px" width="14" height="14" viewBox="0 0 14 14"><circle cx="6.900" cy="6.800" r="6.300" fill="#1c83f8"/><circle cx="6.900" cy="6.800" r="2.300" fill="#fff"/></svg>
<div class="t" style="top:120px;font-size:11.6px;height:16px;line-height:16px;color:#242424;letter-spacing:-0.627px;left:908.9px;">Live</div>
<svg style="left:944px;top:121px" width="14" height="14" viewBox="0 0 14 14"><circle cx="7" cy="6.700" r="5.600" fill="#fff" stroke="#7d7d7d" stroke-width="1"/></svg>
<div class="t" style="top:120px;font-size:11.6px;height:16px;line-height:16px;color:#242424;letter-spacing:-0.195px;left:960.7px;">Archive</div>
<div class="abs" style="left:373.8px;top:205px;width:130.500px;height:49px;border:1px solid #4b8fc9;border-radius:5px;background:#fff;overflow:hidden"><div style="height:21px;background:#3783c0;margin:-1px -1px 0 -1px"></div></div><div class="t" style="top:207.98px;font-size:11.6px;height:16px;line-height:16px;color:#fff;letter-spacing:0.256px;left:425.8px;">film</div>
<div class="abs" style="left:597.2px;top:205px;width:130.500px;height:49px;border:1px solid #4b8fc9;border-radius:5px;background:#fff;overflow:hidden"><div style="height:21px;background:#3783c0;margin:-1px -1px 0 -1px"></div></div><div class="t" style="top:207.98px;font-size:11.6px;height:16px;line-height:16px;color:#fff;letter-spacing:-0.020px;left:649.9px;">actor</div>
<div class="abs" style="left:821px;top:205px;width:130.500px;height:49px;border:1px solid #4b8fc9;border-radius:5px;background:#fff;overflow:hidden"><div style="height:21px;background:#3783c0;margin:-1px -1px 0 -1px"></div></div><div class="t" style="top:207.98px;font-size:11.6px;height:16px;line-height:16px;color:#fff;letter-spacing:0.015px;left:861.2px;">film_actor</div>
<svg style="left:504.5px;top:220px" width="92.7" height="32" viewBox="0 0 92.7 32"><path d="M0 15.600h92.7" stroke="#979797" stroke-width="1.600"/><circle cx="0" cy="15.600" r="2.600" fill="#656565"/><circle cx="92.7" cy="15.600" r="2.600" fill="#656565"/><circle cx="39.45" cy="14.4" r="10.55" fill="#fff"/><circle cx="54.05" cy="14.4" r="10.55" fill="#fff"/><path d="M46.75 6.78A10.55 10.55 0 0 1 46.75 22.02A10.55 10.55 0 0 1 46.75 6.78z" fill="#3aaae8"/><circle cx="39.45" cy="14.4" r="10.55" fill="none" stroke="#3aaae8" stroke-width="1.900"/><circle cx="54.05" cy="14.4" r="10.55" fill="none" stroke="#3aaae8" stroke-width="1.900"/></svg>
<svg style="left:727.9px;top:220px" width="93.1" height="32" viewBox="0 0 93.1 32"><path d="M0 15.600h93.1" stroke="#979797" stroke-width="1.600"/><circle cx="0" cy="15.600" r="2.600" fill="#656565"/><circle cx="93.1" cy="15.600" r="2.600" fill="#656565"/><circle cx="39.65" cy="14.4" r="10.55" fill="#fff"/><circle cx="54.25" cy="14.4" r="10.55" fill="#fff"/><path d="M46.95 6.78A10.55 10.55 0 0 1 46.95 22.02A10.55 10.55 0 0 1 46.95 6.78z" fill="#3aaae8"/><circle cx="39.65" cy="14.4" r="10.55" fill="none" stroke="#3aaae8" stroke-width="1.900"/><circle cx="54.25" cy="14.4" r="10.55" fill="none" stroke="#3aaae8" stroke-width="1.900"/></svg>
<div class="abs" style="left:304px;top:380px;width:720px;height:1px;background:#dcdcdc"></div>
<div class="abs" style="left:304px;top:404px;width:720px;height:1px;background:#e2e2e2"></div>
<div class="abs" style="left:304px;top:440.4px;width:720px;height:16.5px;background:#f9f9f9"></div>
<div class="abs" style="left:304px;top:493.2px;width:720px;height:16.5px;background:#f5f9fd"></div>
<div class="abs" style="left:304px;top:546px;width:720px;height:16.5px;background:#f9f9f9"></div>
<div class="abs" style="left:304px;top:598.8px;width:720px;height:16.5px;background:#f5f9fd"></div>
<div class="abs" style="left:313.5px;top:405px;width:1px;height:248px;background:#f1f1f1"></div>
<div class="abs" style="left:399.8px;top:405px;width:1px;height:248px;background:#f1f1f1"></div>
<div class="abs" style="left:399.8px;top:386px;width:1px;height:14px;background:#d9d9d9"></div>
<div class="abs" style="left:519.4px;top:405px;width:1px;height:248px;background:#f1f1f1"></div>
<div class="abs" style="left:519.4px;top:386px;width:1px;height:14px;background:#d9d9d9"></div>
<div class="abs" style="left:673px;top:405px;width:1px;height:248px;background:#f1f1f1"></div>
<div class="abs" style="left:673px;top:386px;width:1px;height:14px;background:#d9d9d9"></div>
<div class="abs" style="left:783.7px;top:405px;width:1px;height:248px;background:#f1f1f1"></div>
<div class="abs" style="left:783.7px;top:386px;width:1px;height:14px;background:#d9d9d9"></div>
<div class="abs" style="left:909.7px;top:405px;width:1px;height:248px;background:#f1f1f1"></div>
<div class="abs" style="left:909.7px;top:386px;width:1px;height:14px;background:#d9d9d9"></div>
<div class="abs" style="left:999.8px;top:405px;width:1px;height:248px;background:#f1f1f1"></div>
<div class="abs" style="left:999.8px;top:386px;width:1px;height:14px;background:#d9d9d9"></div>
<div class="abs" style="left:313.500px;top:381px;width:1px;height:24px;background:#e6e6e6"></div>
<svg style="left:318px;top:387px" width="13" height="11" viewBox="0 0 13 11"><path d="M5.500.2L2.500 10.800M10.300.2L7.500 10.800M1.500 3h11M.3 6.700h11.200" fill="none" stroke="#4f7fbd" stroke-width="1.050"/></svg>
<div class="t" style="top:384.12px;font-size:11.2px;height:16px;line-height:16px;color:#262626;letter-spacing:-0.138px;left:333.8px;">film_id</div>
<div class="t" style="left:404px;top:388.600px;font-size:9px;line-height:10px;height:10px;color:#4c7dba;-webkit-text-stroke:.35px #4c7dba;transform:scaleX(.66);transform-origin:0 0;">A</div><div class="t" style="left:409.2px;top:385px;font-size:9px;line-height:10px;height:10px;color:#4c7dba;-webkit-text-stroke:.35px #4c7dba;transform:scaleX(.66);transform-origin:0 0;">B</div><div class="t" style="left:413.5px;top:389.800px;font-size:9px;line-height:10px;height:10px;color:#4c7dba;-webkit-text-stroke:.35px #4c7dba;transform:scaleX(.66);transform-origin:0 0;">C</div>
<div class="t" style="top:384.12px;font-size:11.2px;height:16px;line-height:16px;color:#262626;letter-spacing:-0.171px;left:420.3px;">filename</div>
<svg style="left:524px;top:387px" width="13" height="11" viewBox="0 0 13 11"><path d="M5.500.2L2.500 10.800M10.300.2L7.500 10.800M1.500 3h11M.3 6.700h11.200" fill="none" stroke="#4f7fbd" stroke-width="1.050"/></svg>
<div class="t" style="top:384.12px;font-size:11.2px;height:16px;line-height:16px;color:#262626;letter-spacing:-0.030px;left:539.5px;">ProductNumber</div>
<svg style="left:678px;top:387px" width="13" height="11" viewBox="0 0 13 11"><path d="M5.500.2L2.500 10.800M10.300.2L7.500 10.800M1.500 3h11M.3 6.700h11.200" fill="none" stroke="#4f7fbd" stroke-width="1.050"/></svg>
<div class="t" style="top:384.12px;font-size:11.2px;height:16px;line-height:16px;color:#262626;letter-spacing:-0.375px;left:693.7px;">MakeFlag</div>
<svg style="left:789px;top:386.500px" width="12" height="12" viewBox="0 0 12 12"><circle cx="5.800" cy="5.800" r="5" fill="none" stroke="#4f7fbd" stroke-width="1"/><path d="M5.800 2.800v3.200h2.800" fill="none" stroke="#4f7fbd" stroke-width="1"/></svg>
<div class="t" style="top:384.12px;font-size:11.2px;height:16px;line-height:16px;color:#262626;letter-spacing:-0.448px;left:803.7px;">Create_date</div>
<div class="t" style="left:914px;top:388.600px;font-size:9px;line-height:10px;height:10px;color:#4c7dba;-webkit-text-stroke:.35px #4c7dba;transform:scaleX(.66);transform-origin:0 0;">A</div><div class="t" style="left:919.2px;top:385px;font-size:9px;line-height:10px;height:10px;color:#4c7dba;-webkit-text-stroke:.35px #4c7dba;transform:scaleX(.66);transform-origin:0 0;">B</div><div class="t" style="left:923.5px;top:389.800px;font-size:9px;line-height:10px;height:10px;color:#4c7dba;-webkit-text-stroke:.35px #4c7dba;transform:scaleX(.66);transform-origin:0 0;">C</div>
<div class="t" style="top:384.12px;font-size:11.2px;height:16px;line-height:16px;color:#262626;letter-spacing:-0.259px;left:930.1px;">Color</div>
<svg style="left:1004px;top:387px" width="13" height="11" viewBox="0 0 13 11"><path d="M5.500.2L2.500 10.800M10.300.2L7.500 10.800M1.500 3h11M.3 6.700h11.200" fill="none" stroke="#4f7fbd" stroke-width="1.050"/></svg>
<div class="t" style="top:384.12px;font-size:11.2px;height:16px;line-height:16px;color:#262626;left:1020px;">M</div>
<div class="t" style="top:406.19px;font-size:11px;height:16px;line-height:16px;color:#262626;letter-spacing:-0.530px;right:633.43px;">316</div>
<div class="t" style="top:406.19px;font-size:11px;height:16px;line-height:16px;color:#262626;letter-spacing:-0.485px;left:404.1px;">Blade</div>
<div class="t" style="top:406.19px;font-size:11px;height:16px;line-height:16px;color:#262626;letter-spacing:-0.349px;left:523.7px;">BL-2036</div>
<div class="t" style="top:406.19px;font-size:11px;height:16px;line-height:16px;color:#262626;right:247.5px;">1</div>
<div class="t" style="top:406.19px;font-size:11px;height:16px;line-height:16px;color:#262626;letter-spacing:-0.009px;right:121.809px;">2019-01-02</div>
<div class="t" style="top:406.19px;font-size:11px;height:16px;line-height:16px;color:#262626;letter-spacing:0.208px;left:914.1px;">[Null]</div>
<div class="t" style="top:424.19px;font-size:11px;height:16px;line-height:16px;color:#262626;letter-spacing:-0.530px;right:633.43px;">317</div>
<div class="t" style="top:424.19px;font-size:11px;height:16px;line-height:16px;color:#262626;letter-spacing:-0.297px;left:404.1px;">LL Crankarm</div>
<div class="t" style="top:424.19px;font-size:11px;height:16px;line-height:16px;color:#262626;letter-spacing:-0.270px;left:523.7px;">CA-5965</div>
<div class="t" style="top:424.19px;font-size:11px;height:16px;line-height:16px;color:#262626;right:247.5px;">0</div>
<div class="t" style="top:424.19px;font-size:11px;height:16px;line-height:16px;color:#262626;letter-spacing:-0.009px;right:121.809px;">2019-01-23</div>
<div class="t" style="top:424.19px;font-size:11px;height:16px;line-height:16px;color:#262626;letter-spacing:-0.502px;left:914.1px;">Black</div>
<div class="t" style="top:441.19px;font-size:11px;height:16px;line-height:16px;color:#262626;letter-spacing:-0.530px;right:633.43px;">318</div>
<div class="t" style="top:441.19px;font-size:11px;height:16px;line-height:16px;color:#262626;letter-spacing:-0.162px;left:404.1px;">ML Crankarm</div>
<div class="t" style="top:441.19px;font-size:11px;height:16px;line-height:16px;color:#262626;letter-spacing:-0.204px;left:523.7px;">CA-6738</div>
<div class="t" style="top:441.19px;font-size:11px;height:16px;line-height:16px;color:#262626;right:247.5px;">0</div>
<div class="t" style="top:441.19px;font-size:11px;height:16px;line-height:16px;color:#262626;letter-spacing:-0.009px;right:121.809px;">2019-01-24</div>
<div class="t" style="top:441.19px;font-size:11px;height:16px;line-height:16px;color:#262626;letter-spacing:-0.502px;left:914.1px;">Black</div>
<div class="t" style="top:459.19px;font-size:11px;height:16px;line-height:16px;color:#262626;letter-spacing:-0.530px;right:633.43px;">319</div>
<div class="t" style="top:459.19px;font-size:11px;height:16px;line-height:16px;color:#262626;letter-spacing:-0.230px;left:404.1px;">HL Crankarm</div>
<div class="t" style="top:459.19px;font-size:11px;height:16px;line-height:16px;color:#262626;letter-spacing:-0.270px;left:523.7px;">CA-7457</div>
<div class="t" style="top:459.19px;font-size:11px;height:16px;line-height:16px;color:#262626;right:247.5px;">0</div>
<div class="t" style="top:459.19px;font-size:11px;height:16px;line-height:16px;color:#262626;letter-spacing:-0.009px;right:121.809px;">2019-01-24</div>
<div class="t" style="top:459.19px;font-size:11px;height:16px;line-height:16px;color:#262626;letter-spacing:-0.502px;left:914.1px;">Black</div>
<div class="t" style="top:477.19px;font-size:11px;height:16px;line-height:16px;color:#262626;letter-spacing:-0.530px;right:633.43px;">320</div>
<div class="t" style="top:477.19px;font-size:11px;height:16px;line-height:16px;color:#262626;letter-spacing:-0.057px;left:404.1px;">Chainring Bolts</div>
<div class="t" style="top:477.19px;font-size:11px;height:16px;line-height:16px;color:#262626;letter-spacing:-0.337px;left:523.7px;">CB-2903</div>
<div class="t" style="top:477.19px;font-size:11px;height:16px;line-height:16px;color:#262626;right:247.5px;">0</div>
<div class="t" style="top:477.19px;font-size:11px;height:16px;line-height:16px;color:#262626;letter-spacing:-0.009px;right:121.809px;">2019-01-24</div>
<div class="t" style="top:477.19px;font-size:11px;height:16px;line-height:16px;color:#262626;letter-spacing:-0.243px;left:914.1px;">Silver</div>
<div class="t" style="top:494.19px;font-size:11px;height:16px;line-height:16px;color:#262626;letter-spacing:-0.530px;right:633.43px;">321</div>
<div class="t" style="top:494.19px;font-size:11px;height:16px;line-height:16px;color:#262626;letter-spacing:0.095px;left:404.1px;">Chainring Nut</div>
<div class="t" style="top:494.19px;font-size:11px;height:16px;line-height:16px;color:#262626;letter-spacing:-0.205px;left:523.7px;">CN-6137</div>
<div class="t" style="top:494.19px;font-size:11px;height:16px;line-height:16px;color:#262626;right:247.5px;">0</div>
<div class="t" style="top:494.19px;font-size:11px;height:16px;line-height:16px;color:#262626;letter-spacing:-0.009px;right:121.809px;">2019-01-24</div>
<div class="t" style="top:494.19px;font-size:11px;height:16px;line-height:16px;color:#262626;letter-spacing:-0.243px;left:914.1px;">Silver</div>
<div class="t" style="top:512.19px;font-size:11px;height:16px;line-height:16px;color:#262626;letter-spacing:-0.530px;right:633.43px;">322</div>
<div class="t" style="top:512.19px;font-size:11px;height:16px;line-height:16px;color:#262626;letter-spacing:-0.074px;left:404.1px;">Chainring</div>
<div class="t" style="top:512.19px;font-size:11px;height:16px;line-height:16px;color:#262626;letter-spacing:-0.439px;left:523.7px;">CR-7833</div>
<div class="t" style="top:512.19px;font-size:11px;height:16px;line-height:16px;color:#262626;right:247.5px;">0</div>
<div class="t" style="top:512.19px;font-size:11px;height:16px;line-height:16px;color:#262626;letter-spacing:-0.009px;right:121.809px;">2019-04-02</div>
<div class="t" style="top:512.19px;font-size:11px;height:16px;line-height:16px;color:#262626;letter-spacing:-0.502px;left:914.1px;">Black</div>
<div class="t" style="top:529.19px;font-size:11px;height:16px;line-height:16px;color:#262626;letter-spacing:-0.530px;right:633.43px;">323</div>
<div class="t" style="top:529.19px;font-size:11px;height:16px;line-height:16px;color:#262626;letter-spacing:-0.348px;left:404.1px;">Crown Race</div>
<div class="t" style="top:529.19px;font-size:11px;height:16px;line-height:16px;color:#262626;letter-spacing:-0.505px;left:523.7px;">CR-9981</div>
<div class="t" style="top:529.19px;font-size:11px;height:16px;line-height:16px;color:#262626;right:247.5px;">0</div>
<div class="t" style="top:529.19px;font-size:11px;height:16px;line-height:16px;color:#262626;letter-spacing:-0.009px;right:121.809px;">2019-04-20</div>
<div class="t" style="top:529.19px;font-size:11px;height:16px;line-height:16px;color:#b9b9b9;letter-spacing:0.208px;left:914.1px;">[Null]</div>
<div class="t" style="top:547.19px;font-size:11px;height:16px;line-height:16px;color:#262626;letter-spacing:-0.530px;right:633.43px;">324</div>
<div class="t" style="top:547.19px;font-size:11px;height:16px;line-height:16px;color:#262626;letter-spacing:-0.381px;left:404.1px;">Chain Stays</div>
<div class="t" style="top:547.19px;font-size:11px;height:16px;line-height:16px;color:#262626;letter-spacing:-0.504px;left:523.7px;">CS-2812</div>
<div class="t" style="top:547.19px;font-size:11px;height:16px;line-height:16px;color:#262626;right:247.5px;">1</div>
<div class="t" style="top:547.19px;font-size:11px;height:16px;line-height:16px;color:#262626;letter-spacing:-0.009px;right:121.809px;">2019-04-20</div>
<div class="t" style="top:547.19px;font-size:11px;height:16px;line-height:16px;color:#b9b9b9;letter-spacing:0.208px;left:914.1px;">[Null]</div>
<div class="t" style="top:565.19px;font-size:11px;height:16px;line-height:16px;color:#262626;letter-spacing:-0.530px;right:633.43px;">325</div>
<div class="t" style="top:565.19px;font-size:11px;height:16px;line-height:16px;color:#262626;letter-spacing:-0.383px;left:404.1px;">Decal 1</div>
<div class="t" style="top:565.19px;font-size:11px;height:16px;line-height:16px;color:#262626;letter-spacing:-0.272px;left:523.7px;">DC-8732</div>
<div class="t" style="top:565.19px;font-size:11px;height:16px;line-height:16px;color:#262626;right:247.5px;">0</div>
<div class="t" style="top:565.19px;font-size:11px;height:16px;line-height:16px;color:#262626;letter-spacing:-0.009px;right:121.809px;">2019-04-20</div>
<div class="t" style="top:565.19px;font-size:11px;height:16px;line-height:16px;color:#b9b9b9;letter-spacing:0.208px;left:914.1px;">[Null]</div>
<div class="t" style="top:582.19px;font-size:11px;height:16px;line-height:16px;color:#262626;letter-spacing:-0.530px;right:633.43px;">326</div>
<div class="t" style="top:582.19px;font-size:11px;height:16px;line-height:16px;color:#262626;letter-spacing:-0.316px;left:404.1px;">Decal 2</div>
<div class="t" style="top:582.19px;font-size:11px;height:16px;line-height:16px;color:#262626;letter-spacing:-0.272px;left:523.7px;">DC-9824</div>
<div class="t" style="top:582.19px;font-size:11px;height:16px;line-height:16px;color:#262626;right:247.5px;">0</div>
<div class="t" style="top:582.19px;font-size:11px;height:16px;line-height:16px;color:#262626;letter-spacing:-0.009px;right:121.809px;">2019-05-27</div>
<div class="t" style="top:582.19px;font-size:11px;height:16px;line-height:16px;color:#b9b9b9;letter-spacing:0.208px;left:914.1px;">[Null]</div>
<div class="t" style="top:600.19px;font-size:11px;height:16px;line-height:16px;color:#262626;letter-spacing:-0.530px;right:633.43px;">327</div>
<div class="t" style="top:600.19px;font-size:11px;height:16px;line-height:16px;color:#262626;letter-spacing:-0.145px;left:404.1px;">Down Tube</div>
<div class="t" style="top:600.19px;font-size:11px;height:16px;line-height:16px;color:#262626;letter-spacing:-0.201px;left:523.7px;">DT-2377</div>
<div class="t" style="top:600.19px;font-size:11px;height:16px;line-height:16px;color:#262626;right:247.5px;">1</div>
<div class="t" style="top:600.19px;font-size:11px;height:16px;line-height:16px;color:#262626;letter-spacing:-0.009px;right:121.809px;">2019-05-27</div>
<div class="t" style="top:600.19px;font-size:11px;height:16px;line-height:16px;color:#b9b9b9;letter-spacing:0.208px;left:914.1px;">[Null]</div>
<div class="t" style="top:617.19px;font-size:11px;height:16px;line-height:16px;color:#262626;letter-spacing:-0.530px;right:633.43px;">328</div>
<div class="t" style="top:617.19px;font-size:11px;height:16px;line-height:16px;color:#262626;letter-spacing:-0.083px;left:404.1px;">Mountain End Caps</div>
<div class="t" style="top:617.19px;font-size:11px;height:16px;line-height:16px;color:#262626;letter-spacing:-0.395px;left:523.7px;">EC-M092</div>
<div class="t" style="top:617.19px;font-size:11px;height:16px;line-height:16px;color:#262626;right:247.5px;">1</div>
<div class="t" style="top:617.19px;font-size:11px;height:16px;line-height:16px;color:#262626;letter-spacing:-0.009px;right:121.809px;">2019-05-27</div>
<div class="t" style="top:617.19px;font-size:11px;height:16px;line-height:16px;color:#b9b9b9;letter-spacing:0.208px;left:914.1px;">[Null]</div>
<div class="t" style="top:635.19px;font-size:11px;height:16px;line-height:16px;color:#262626;letter-spacing:-0.530px;right:633.43px;">329</div>
<div class="t" style="top:635.19px;font-size:11px;height:16px;line-height:16px;color:#262626;letter-spacing:-0.431px;left:404.1px;">Road End Caps</div>
<div class="t" style="top:635.19px;font-size:11px;height:16px;line-height:16px;color:#262626;letter-spacing:-0.395px;left:523.7px;">EC-M090</div>
<div class="t" style="top:635.19px;font-size:11px;height:16px;line-height:16px;color:#262626;right:247.5px;">0</div>
<div class="t" style="top:635.19px;font-size:11px;height:16px;line-height:16px;color:#262626;letter-spacing:-0.009px;right:121.809px;">2019-05-27</div>
<div class="t" style="top:635.19px;font-size:11px;height:16px;line-height:16px;color:#b9b9b9;letter-spacing:0.208px;left:914.1px;">[Null]</div>
<div id="frame"></div>
</div>
</body></html>
